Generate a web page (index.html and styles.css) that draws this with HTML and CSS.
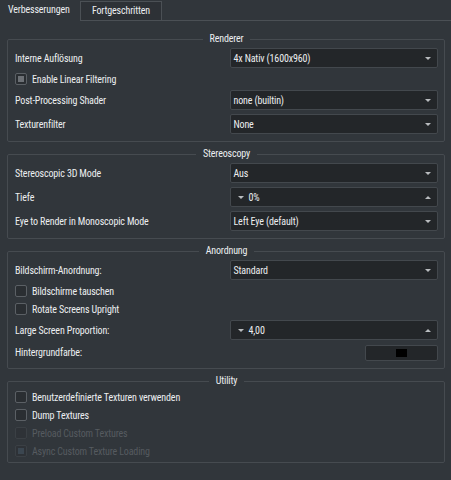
FILE: index.html
```html
<!DOCTYPE html>
<html lang="de">
<head>
<meta charset="utf-8">
<title>Grafik</title>
<link rel="stylesheet" href="styles.css">
</head>
<body>
<div class="tabbar">
  <div class="tab active">Verbesserungen</div>
  <div class="tab inactive">Fortgeschritten</div>
  <div class="tabfill"></div>
</div>
<div class="panel">
  <fieldset class="group">
    <legend>Renderer</legend>
    <div class="grid">
      <span class="label">Interne Auflösung</span>
      <div class="combo"><span>4x Nativ (1600x960)</span><i class="down"></i></div>
      <div class="check span2"><span class="box checked"></span><span>Enable Linear Filtering</span></div>
      <span class="label">Post-Processing Shader</span>
      <div class="combo"><span>none (builtin)</span><i class="down"></i></div>
      <span class="label">Texturenfilter</span>
      <div class="combo"><span>None</span><i class="down"></i></div>
    </div>
  </fieldset>
  <fieldset class="group">
    <legend>Stereoscopy</legend>
    <div class="grid">
      <span class="label">Stereoscopic 3D Mode</span>
      <div class="combo"><span>Aus</span><i class="down"></i></div>
      <span class="label">Tiefe</span>
      <div class="spin"><i class="down"></i><span class="spin-val">0%</span><i class="up"></i></div>
      <span class="label">Eye to Render in Monoscopic Mode</span>
      <div class="combo"><span>Left Eye (default)</span><i class="down"></i></div>
    </div>
  </fieldset>
  <fieldset class="group">
    <legend>Anordnung</legend>
    <div class="grid">
      <span class="label">Bildschirm-Anordnung:</span>
      <div class="combo"><span>Standard</span><i class="down"></i></div>
      <div class="check span2"><span class="box"></span><span>Bildschirme tauschen</span></div>
      <div class="check span2"><span class="box"></span><span>Rotate Screens Upright</span></div>
      <span class="label">Large Screen Proportion:</span>
      <div class="spin"><i class="down"></i><span class="spin-val">4,00</span><i class="up"></i></div>
      <span class="label">Hintergrundfarbe:</span>
      <div class="color-cell"><div class="colorbtn"><span class="swatch"></span></div></div>
    </div>
  </fieldset>
  <fieldset class="group utility">
    <legend>Utility</legend>
    <div class="grid">
      <div class="check span2"><span class="box"></span><span>Benutzerdefinierte Texturen verwenden</span></div>
      <div class="check span2"><span class="box"></span><span>Dump Textures</span></div>
      <div class="check span2 disabled"><span class="box"></span><span>Preload Custom Textures</span></div>
      <div class="check span2 disabled"><span class="box checked"></span><span>Async Custom Texture Loading</span></div>
    </div>
  </fieldset>
</div>
</body>
</html>
```
FILE: styles.css
```css
html, body {
  margin: 0;
  padding: 0;
}
body {
  width: 451px;
  height: 480px;
  overflow: hidden;
  background: #31363b;
  color: #eceef0;
  font-family: "Roboto Condensed", "Roboto", sans-serif;
  font-size: 10px;
  letter-spacing: -0.15px;
}

.tabbar {
  display: flex;
  height: 21px;
}
.tab {
  box-sizing: border-box;
  line-height: 20px;
  white-space: nowrap;
}
.tab.active {
  width: 80px;
  padding-left: 8px;
}
.tab.inactive {
  width: 82px;
  height: 20px;
  margin-top: 1px;
  line-height: 18px;
  text-align: center;
  border: 1px solid #4b5055;
  background: #2d3136;
}
.tabfill {
  flex: 1;
  border-bottom: 1px solid #4b5055;
}

.panel {
  display: flex;
  flex-direction: column;
  gap: 5px;
  padding: 11px 6px 0 7px;
}

.group {
  margin: 0;
  padding: 2px 6px 7px 7px;
  border: 1px solid #464b50;
  border-radius: 2px;
  min-width: 0;
}
.group legend {
  margin: 0 auto;
  padding: 0 7px;
  line-height: 14px;
  font-size: 10px;
}
.group.utility {
  padding-bottom: 4px;
}

.grid {
  display: grid;
  grid-template-columns: 1fr 1fr;
  column-gap: 6px;
  row-gap: 4px;
  align-items: center;
}
.span2 {
  grid-column: 1 / span 2;
}
.label {
  white-space: nowrap;
}

.combo, .spin {
  box-sizing: border-box;
  height: 20px;
  display: flex;
  align-items: center;
  border: 1px solid #43484d;
  border-radius: 2px;
  background: #232629;
  padding: 0 6px 0 3px;
}
.combo span {
  flex: 1;
}
.spin {
  padding-left: 7px;
}
.spin-val {
  flex: 1;
  margin-left: 5px;
}
.down, .up {
  display: block;
  width: 0;
  height: 0;
  border-left: 3px solid transparent;
  border-right: 3px solid transparent;
}
.down {
  border-top: 3px solid #b9bcbf;
}
.up {
  border-bottom: 3px solid #b9bcbf;
}

.color-cell {
  display: flex;
  justify-content: flex-end;
  height: 17px;
}
.colorbtn {
  box-sizing: border-box;
  width: 73px;
  height: 16px;
  margin-top: 1px;
  border: 1px solid #43484d;
  border-radius: 2px;
  background: #232629;
  display: flex;
  align-items: center;
  justify-content: center;
}
.swatch {
  display: block;
  width: 11px;
  height: 8px;
  background: #000;
}

.check {
  display: flex;
  align-items: center;
  gap: 5px;
  height: 14px;
  white-space: nowrap;
}
.box {
  box-sizing: border-box;
  width: 12px;
  height: 12px;
  border: 1px solid #5b6065;
  border-radius: 2px;
  background: #2a2e32;
  padding: 2px;
}
.box.checked::after {
  content: "";
  display: block;
  width: 6px;
  height: 6px;
  background: #6c7075;
}
.check.disabled {
  color: #565b60;
}
.check.disabled .box {
  border-color: #3b4045;
  background: #2e3237;
}
.check.disabled .box.checked::after {
  background: #3b4650;
}
```
